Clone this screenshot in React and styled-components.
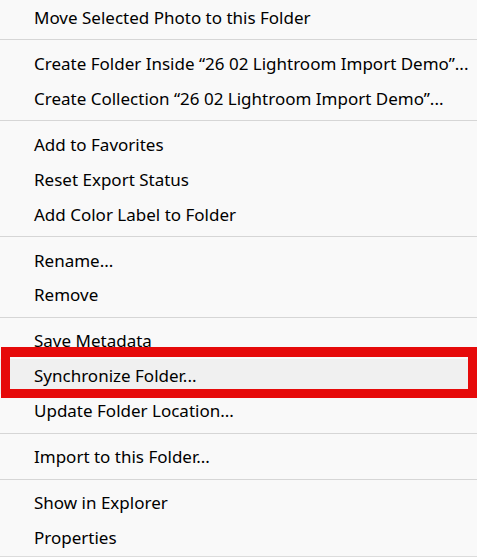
import React from 'react'
import styled, { createGlobalStyle } from 'styled-components'

const sections = [
  [{ label: 'Move Selected Photo to this Folder' }],
  [
    { label: 'Create Folder Inside \u201c26 02 Lightroom Import Demo\u201d...' },
    { label: 'Create Collection \u201c26 02 Lightroom Import Demo\u201d...' },
  ],
  [
    { label: 'Add to Favorites' },
    { label: 'Reset Export Status' },
    { label: 'Add Color Label to Folder' },
  ],
  [{ label: 'Rename...' }, { label: 'Remove' }],
  [
    { label: 'Save Metadata' },
    { label: 'Synchronize Folder...', active: true },
    { label: 'Update Folder Location...' },
  ],
  [{ label: 'Import to this Folder...' }],
  [{ label: 'Show in Explorer' }, { label: 'Properties' }],
]

function App() {
  return (
    <>
      <GlobalStyle />
      <Menu>
        {sections.map((items, i) => (
          <React.Fragment key={i}>
            {i > 0 && <Separator />}
            {items.map(item => (
              <Item key={item.label} $active={item.active}>
                {item.label}
                {item.active && <Highlight />}
              </Item>
            ))}
          </React.Fragment>
        ))}
      </Menu>
    </>
  )
}

export default App

const GlobalStyle = createGlobalStyle`
  html, body {
    margin: 0;
    padding: 0;
    background: #f9f9f9;
  }
`

const Menu = styled.div`
  width: 477px;
  height: 557px;
  box-sizing: border-box;
  display: flex;
  flex-direction: column;
  padding-top: 1px;
  background: #f9f9f9;
  border-bottom: 1px solid #dcdcdc;
  overflow: hidden;
  font-family: 'Noto Sans', 'Open Sans', sans-serif;
`

const Item = styled.div`
  position: relative;
  height: 35px;
  box-sizing: border-box;
  display: flex;
  align-items: center;
  padding: 0 0 2px 34px;
  font-size: 17px;
  color: #000;
  white-space: nowrap;
  background: ${p => (p.$active ? '#f0f0f0' : 'transparent')};
`

const Separator = styled.div`
  height: 11px;
  display: flex;
  align-items: center;
  &::after {
    content: '';
    flex: 1;
    height: 1px;
    margin-top: -3px;
    background: #d6d6d6;
  }
`

const Highlight = styled.div`
  position: absolute;
  top: -12px;
  left: 1px;
  right: 0;
  height: 51px;
  box-sizing: border-box;
  border: 9px solid #e60a0a;
  border-top-width: 10px;
`
